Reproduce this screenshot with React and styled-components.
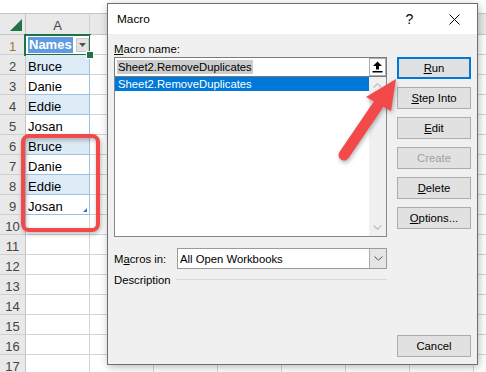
import React from "react";
import styled, { createGlobalStyle } from "styled-components";

const Global = createGlobalStyle`
  html, body { margin: 0; padding: 0; background: #fff; overflow: hidden; }
  * { box-sizing: border-box; }
`;

const Page = styled.div`
  position: relative;
  width: 486px;
  height: 372px;
  overflow: hidden;
  background: #fff;
`;

/* ---------- Excel sheet ---------- */
const Sheet = styled.div`
  display: flex;
  flex-direction: column;
  font-family: "Liberation Sans", Arial, sans-serif;
  font-size: 13px;
  color: #000;
`;

const TopBar = styled.div`
  height: 14px;
  background: #fff;
  border-bottom: 1px solid #c6c6c6;
`;

const Grid = styled.div`
  display: grid;
  grid-template-columns: 26px repeat(8, 64px);
  grid-template-rows: 21px repeat(17, 20px);
`;

const Corner = styled.div`
  position: relative;
  background: #e9e9e9;
  border-right: 1px solid #c6c6c6;
  border-bottom: 1px solid #c6c6c6;
  &::after {
    content: "";
    position: absolute;
    right: 3px;
    bottom: 3px;
    width: 0;
    height: 0;
    border-left: 12px solid transparent;
    border-bottom: 12px solid #217346;
  }
`;

const ColHeader = styled.div`
  background: #e9e9e9;
  border-right: 1px solid #d0d0d0;
  border-bottom: 1px solid #c6c6c6;
  display: flex;
  align-items: center;
  justify-content: center;
  padding-top: 2px;
  color: #444;
`;

const RowHeader = styled.div`
  background: #e9e9e9;
  border-right: 1px solid #c6c6c6;
  border-bottom: 1px solid #cfcfcf;
  display: flex;
  align-items: center;
  justify-content: center;
  padding-top: 3px;
  color: ${(p) => (p.$active ? "#9a7b2c" : "#444")};
`;

const Cell = styled.div`
  position: relative;
  display: flex;
  align-items: center;
  padding: 3px 0 0 2px;
  white-space: nowrap;
  background: ${(p) => (p.$band ? "#ddebf7" : "#fff")};
  border-right: 1px solid ${(p) => (p.$table ? "#9bc2e6" : "#d4d4d4")};
  border-bottom: 1px solid ${(p) => (p.$table ? "#9bc2e6" : "#d4d4d4")};
`;

const HeaderCell = styled(Cell)`
  padding-top: 1px;
  &::after {
    content: "";
    position: absolute;
    left: -2px;
    top: -1px;
    right: -2px;
    bottom: -2px;
    border: 2px solid #217346;
  }
`;

const FillHandle = styled.span`
  position: absolute;
  right: -4px;
  bottom: -4px;
  width: 6px;
  height: 6px;
  background: #217346;
  outline: 1px solid #fff;
  z-index: 2;
`;

const NamesTag = styled.span`
  background: #5f9be0;
  color: #fff;
  font-weight: bold;
  line-height: 16px;
  padding: 0 1px;
`;

const FilterButton = styled.span`
  margin-left: 3px;
  width: 14px;
  height: 14px;
  background: #e3e3e3;
  border: 1px solid #c8c8c8;
  display: flex;
  align-items: center;
  justify-content: center;
`;

const ResizeMark = styled.span`
  position: absolute;
  right: 2px;
  bottom: 2px;
  width: 0;
  height: 0;
  border-left: 4px solid transparent;
  border-bottom: 4px solid #3f6fc4;
`;

/* ---------- Dialog ---------- */
const Dialog = styled.div`
  position: absolute;
  left: 107px;
  top: 3px;
  width: 371px;
  height: 362px;
  border: 1px solid #6f6f6f;
  box-shadow: 1px 2px 8px rgba(0, 0, 0, 0.28);
  display: flex;
  flex-direction: column;
  font-family: "Liberation Sans", Arial, sans-serif;
  font-size: 11.3px;
  color: #000;
  background: #f0f0f0;
`;

const TitleBar = styled.div`
  height: 30px;
  background: #fff;
  display: flex;
  align-items: center;
  padding-left: 9px;
  font-size: 11.8px;
`;

const TitleText = styled.span`
  flex: 1;
`;

const TitleButton = styled.span`
  width: 45px;
  height: 30px;
  display: flex;
  align-items: center;
  justify-content: center;
  font-size: 14px;
`;

const Body = styled.div`
  flex: 1;
  display: flex;
  gap: 10px;
  padding: 8px 6px 7px 6px;
`;

const LeftCol = styled.div`
  width: 273px;
  display: flex;
  flex-direction: column;
`;

const RightCol = styled.div`
  width: 74px;
  display: flex;
  flex-direction: column;
  gap: 8px;
  padding-top: 15px;
`;

const Label = styled.div`
  line-height: 14px;
  height: 14px;
  margin-bottom: 1px;
`;

const Mn = styled.span`
  text-decoration: underline;
  text-underline-offset: 1px;
`;

const NameInput = styled.div`
  height: 20px;
  background: #fff;
  border: 1px solid #7a7a7a;
  display: flex;
  align-items: center;
  padding-left: 2px;
`;

const SelectedText = styled.span`
  background: #cccccc;
  line-height: 14px;
  padding: 0 1px;
`;

const UpButton = styled.span`
  margin-left: auto;
  width: 17px;
  height: 18px;
  background: #fff;
  border: 1px solid #adadad;
  display: flex;
  align-items: center;
  justify-content: center;
`;

const ListBox = styled.div`
  height: 160px;
  background: #fff;
  border: 1px solid #828790;
  border-top: none;
  display: flex;
`;

const ListItems = styled.div`
  flex: 1;
  display: flex;
  flex-direction: column;
`;

const ListItem = styled.div`
  height: 14px;
  line-height: 14px;
  padding-left: 3px;
  background: ${(p) => (p.$selected ? "#0078d7" : "transparent")};
  color: ${(p) => (p.$selected ? "#fff" : "#000")};
`;

const ScrollBar = styled.div`
  width: 17px;
  background: #f0f0f0;
  display: flex;
  flex-direction: column;
  justify-content: space-between;
  align-items: center;
  padding: 6px 0 6px;
`;

const MacrosRow = styled.div`
  margin-top: 11px;
  height: 21px;
  display: flex;
  align-items: center;
`;

const MacrosLabel = styled.span`
  width: 63px;
`;

const Select = styled.div`
  flex: 1;
  height: 21px;
  background: #fff;
  border: 1px solid #9a9a9a;
  display: flex;
  align-items: center;
  padding-left: 2px;
`;

const SelectArrow = styled.span`
  margin-left: auto;
  width: 17px;
  height: 19px;
  background: #e5e5e5;
  border-left: 1px solid #adadad;
  display: flex;
  align-items: center;
  justify-content: center;
`;

const DescRow = styled.div`
  margin-top: 4px;
  height: 14px;
  display: flex;
  align-items: center;
  line-height: 14px;
`;

const DescLine = styled.span`
  flex: 1;
  margin-left: 5px;
  margin-top: -1px;
  border-top: 1px solid #d9d9d9;
`;

const Button = styled.div`
  height: 22px;
  background: #e1e1e1;
  border: ${(p) => (p.$default ? "2px solid #0078d7" : "1px solid #adadad")};
  display: flex;
  align-items: center;
  justify-content: center;
  color: ${(p) => (p.$disabled ? "#a0a0a0" : "#000")};
  margin-top: ${(p) => (p.$bottom ? "auto" : "0")};
`;

/* ---------- Annotations ---------- */
const Overlay = styled.svg`
  position: absolute;
  left: 0;
  top: 0;
  pointer-events: none;
  filter: drop-shadow(1px 2px 2px rgba(0, 0, 0, 0.3));
`;

const names = [
  "Bruce",
  "Danie",
  "Eddie",
  "Josan",
  "Bruce",
  "Danie",
  "Eddie",
  "Josan",
];

function SheetView() {
  const rows = [];
  for (let r = 1; r <= 17; r++) {
    rows.push(
      <RowHeader key={`h${r}`} $active={r === 1}>
        {r}
      </RowHeader>
    );
    if (r === 1) {
      rows.push(
        <HeaderCell key={`a${r}`} $table>
          <NamesTag>Names</NamesTag>
          <FilterButton>
            <svg width="7" height="4" viewBox="0 0 7 4">
              <polygon points="0,0 7,0 3.5,4" fill="#555" />
            </svg>
          </FilterButton>
          <FillHandle />
        </HeaderCell>
      );
    } else if (r <= 9) {
      rows.push(
        <Cell key={`a${r}`} $table $band={r % 2 === 0}>
          {names[r - 2]}
          {r === 9 && <ResizeMark />}
        </Cell>
      );
    } else {
      rows.push(<Cell key={`a${r}`} />);
    }
    for (let c = 0; c < 7; c++) rows.push(<Cell key={`c${r}-${c}`} />);
  }
  return (
    <Sheet>
      <TopBar />
      <Grid>
        <Corner />
        <ColHeader>A</ColHeader>
        {Array.from({ length: 7 }).map((_, i) => (
          <ColHeader key={i} />
        ))}
        {rows}
      </Grid>
    </Sheet>
  );
}

function MacroDialog() {
  return (
    <Dialog>
      <TitleBar>
        <TitleText>Macro</TitleText>
        <TitleButton>?</TitleButton>
        <TitleButton>
          <svg width="11" height="11" viewBox="0 0 11 11">
            <path d="M0.5 0.5 L10.5 10.5 M10.5 0.5 L0.5 10.5" stroke="#000" strokeWidth="1" />
          </svg>
        </TitleButton>
      </TitleBar>
      <Body>
        <LeftCol>
          <Label>
            <Mn>M</Mn>acro name:
          </Label>
          <NameInput>
            <SelectedText>Sheet2.RemoveDuplicates</SelectedText>
            <UpButton>
              <svg width="11" height="12" viewBox="0 0 11 12">
                <polygon points="5.5,0.5 10,5 7,5 7,8.5 4,8.5 4,5 1,5" fill="#000" />
                <rect x="0.5" y="10" width="10" height="1.5" fill="#000" />
              </svg>
            </UpButton>
          </NameInput>
          <ListBox>
            <ListItems>
              <ListItem $selected>Sheet2.RemoveDuplicates</ListItem>
            </ListItems>
            <ScrollBar>
              <svg width="9" height="5" viewBox="0 0 9 5">
                <polyline points="0.5,4.5 4.5,0.8 8.5,4.5" fill="none" stroke="#c2c2c2" strokeWidth="1.4" />
              </svg>
              <svg width="9" height="5" viewBox="0 0 9 5">
                <polyline points="0.5,0.5 4.5,4.2 8.5,0.5" fill="none" stroke="#c2c2c2" strokeWidth="1.4" />
              </svg>
            </ScrollBar>
          </ListBox>
          <MacrosRow>
            <MacrosLabel>
              M<Mn>a</Mn>cros in:
            </MacrosLabel>
            <Select>
              All Open Workbooks
              <SelectArrow>
                <svg width="9" height="5" viewBox="0 0 9 5">
                  <polyline points="0.5,0.5 4.5,4.2 8.5,0.5" fill="none" stroke="#555" strokeWidth="1" />
                </svg>
              </SelectArrow>
            </Select>
          </MacrosRow>
          <DescRow>
            Description
            <DescLine />
          </DescRow>
        </LeftCol>
        <RightCol>
          <Button $default>
            <Mn>R</Mn>un
          </Button>
          <Button>
            <Mn>S</Mn>tep Into
          </Button>
          <Button>
            <Mn>E</Mn>dit
          </Button>
          <Button $disabled>Create</Button>
          <Button>
            <Mn>D</Mn>elete
          </Button>
          <Button>
            <Mn>O</Mn>ptions...
          </Button>
          <Button $bottom>Cancel</Button>
        </RightCol>
      </Body>
    </Dialog>
  );
}

function Annotations() {
  return (
    <Overlay width="486" height="372" viewBox="0 0 486 372">
      <rect x="23" y="136" width="75" height="94" rx="6" ry="6" fill="none" stroke="#f24a4a" strokeWidth="4" />
      <line x1="344" y1="155" x2="378" y2="105" stroke="#f24a4a" strokeWidth="11" strokeLinecap="round" />
      <polygon points="396,79 366,97 391,111" fill="#f24a4a" />
    </Overlay>
  );
}

export default function App() {
  return (
    <Page>
      <Global />
      <SheetView />
      <MacroDialog />
      <Annotations />
    </Page>
  );
}
